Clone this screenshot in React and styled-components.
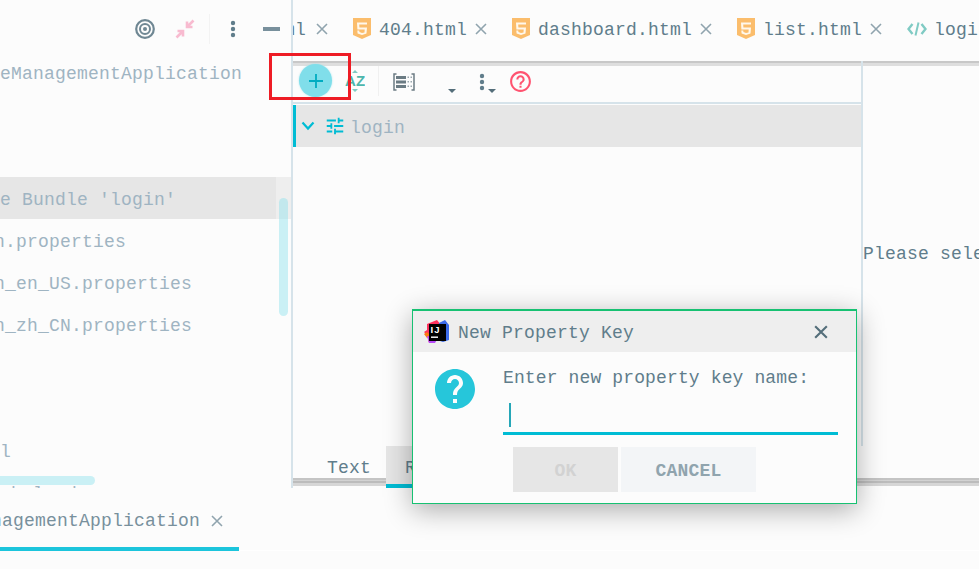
import React from 'react';
import styled, { createGlobalStyle } from 'styled-components';

const GlobalStyle = createGlobalStyle`
  html, body {
    margin: 0;
    padding: 0;
    background: #fcfcfc;
  }
  * { box-sizing: border-box; }
`;

const colors = {
  bg: '#fcfcfc',
  text: '#607d8b',
  faded: '#9fb4c2',
  cyan: '#00bcd4',
  line: '#d6e3ea',
  selected: '#e6e6e6',
  close: '#90a4ae',
};

const Page = styled.div`
  position: relative;
  width: 979px;
  height: 569px;
  overflow: hidden;
  display: flex;
  flex-direction: column;
  background: ${colors.bg};
  font-family: "Liberation Mono", "DejaVu Sans Mono", monospace;
  font-size: 18px;
  letter-spacing: 0.2px;
  color: ${colors.text};
`;

const Workspace = styled.div`
  display: flex;
  height: 488px;
`;

const LeftPane = styled.div`
  position: relative;
  width: 293px;
  flex: none;
  border-right: 2px solid ${colors.line};
  overflow: hidden;
`;

const LeftTools = styled.div`
  display: flex;
  justify-content: flex-end;
  align-items: flex-start;
  height: 51px;
  padding: 19px 11px 0 0;
`;

const ToolSlot = styled.div`
  display: flex;
  align-items: center;
  justify-content: center;
  height: 20px;
  margin-left: ${({ $gap }) => $gap || 0}px;
`;

const ToolDivider = styled.div`
  width: 1px;
  height: 30px;
  margin: -5px 0 0 14px;
  background: #f3f3f3;
`;

const TreeRow = styled.div`
  height: 42px;
  line-height: 46px;
  white-space: pre;
  overflow: hidden;
  color: ${colors.faded};
  margin-left: ${({ $shift }) => $shift || 0}px;
  background: ${({ $selected }) => $selected
    ? `linear-gradient(to right, ${colors.selected} 276px, #eeeeee 276px)`
    : 'transparent'};
`;

const VerticalThumb = styled.div`
  position: absolute;
  left: 279px;
  top: 198px;
  width: 9px;
  height: 118px;
  border-radius: 5px;
  background: rgba(128, 222, 234, 0.4);
`;

const HorizontalThumb = styled.div`
  position: absolute;
  left: -10px;
  top: 476px;
  width: 105px;
  height: 9px;
  border-radius: 5px;
  background: rgba(128, 222, 234, 0.4);
`;

const RightPane = styled.div`
  flex: 1;
  min-width: 0;
  display: flex;
  flex-direction: column;
`;

const TabBar = styled.div`
  display: flex;
  align-items: center;
  height: 61px;
  padding-bottom: 3px;
  overflow: hidden;
  flex: none;
`;

const Tab = styled.div`
  display: flex;
  align-items: center;
  flex: none;
  white-space: nowrap;
  margin-left: ${({ $offset }) => $offset ?? 25}px;
`;

const TabLabel = styled.span`
  padding-top: 2px;
`;

const TabIcon = styled.span`
  display: flex;
  margin-right: ${({ $gap }) => $gap || 8}px;
`;

const CloseMark = styled.span`
  display: flex;
  margin-left: ${({ $gap }) => $gap || 8}px;
`;

const EditorRow = styled.div`
  flex: 1;
  display: flex;
  min-height: 0;
  background: linear-gradient(to bottom, #c8c8c8 0, #c8c8c8 2px, #dedede 2px, #dedede 5px, transparent 5px);
`;

const CenterPane = styled.div`
  width: 570px;
  flex: none;
  padding-top: 5px;
  border-right: 2px solid ${colors.line};
`;

const ActionBar = styled.div`
  display: flex;
  align-items: center;
  height: 38px;
  padding: 0 0 7px 6px;
  border-bottom: 2px solid ${colors.line};
`;

const AddButton = styled.div`
  display: flex;
  align-items: center;
  justify-content: center;
  width: 33px;
  height: 33px;
  flex: none;
  border-radius: 50%;
  background: #80deea;
  box-shadow: 0 0 2px rgba(128, 222, 234, 0.7);
`;

const ActionIcon = styled.span`
  display: flex;
  flex: none;
  margin-left: ${({ $gap }) => $gap || 0}px;
  margin-top: ${({ $drop }) => $drop || 0}px;
`;

const ActionDivider = styled.div`
  width: 1px;
  height: 30px;
  flex: none;
  margin-left: 13px;
  background: #f0f0f0;
`;

const DropCaret = styled.span`
  flex: none;
  width: 0;
  height: 0;
  margin: 20px 0 0 ${({ $gap }) => $gap}px;
  border-left: 4px solid transparent;
  border-right: 4px solid transparent;
  border-top: 4px solid #546e7a;
`;

const BundleRow = styled.div`
  display: flex;
  align-items: center;
  height: 42px;
  margin-top: 1px;
  padding-left: 5px;
  border-left: 3px solid ${colors.cyan};
  background: ${colors.selected};
  color: ${colors.faded};
`;

const BundleName = styled.span`
  margin-left: 4px;
  padding-top: 4px;
`;

const EmptyHint = styled.div`
  flex: 1;
  display: flex;
  align-items: center;
  padding: 7px 0 6px 0;
  white-space: nowrap;
  overflow: hidden;
`;

const ViewTabs = styled.div`
  display: flex;
  height: 42px;
  flex: none;
  background: linear-gradient(to bottom,
    #c4c4c4 0, #c4c4c4 2px,
    #d2d2d2 2px, #d2d2d2 3px,
    #bcbcbc 3px, #bcbcbc 5px,
    #d6d6d6 5px, #d6d6d6 8px) 0 32px / 100% 8px no-repeat;
`;

const ViewTab = styled.div`
  width: ${({ $width }) => $width}px;
  padding-left: ${({ $pad }) => $pad}px;
  line-height: 44px;
  background: ${({ $active }) => ($active ? colors.selected : 'transparent')};
  border-bottom: ${({ $active }) => ($active ? `4px solid ${colors.cyan}` : 'none')};
  white-space: nowrap;
  overflow: hidden;
`;

const BottomBar = styled.div`
  flex: 1;
  display: flex;
  flex-direction: column;
`;

const ToolWindowTabs = styled.div`
  height: 63px;
  flex: none;
  border-bottom: 1px solid #ffffff;
`;

const ToolWindowTab = styled.div`
  display: flex;
  align-items: center;
  width: 239px;
  height: 63px;
  padding-top: 7px;
  border-bottom: 4px solid #1cc5dc;
  white-space: nowrap;
  color: #78909c;
`;

const ToolWindowName = styled.span`
  margin-left: -9px;
`;

const Highlight = styled.div`
  position: absolute;
  left: 269px;
  top: 53px;
  width: 82px;
  height: 47px;
  border: 3px solid #ee1c25;
`;

const Dialog = styled.div`
  position: absolute;
  left: 412px;
  top: 309px;
  width: 445px;
  height: 195px;
  display: flex;
  flex-direction: column;
  background: ${colors.bg};
  border-style: solid;
  border-color: #17c172;
  border-width: 2px 1px 1px 1px;
  box-shadow: 0 6px 26px rgba(0, 0, 0, 0.32);
`;

const DialogTitle = styled.div`
  display: flex;
  align-items: center;
  height: 41px;
  flex: none;
  padding: 0 28px 0 11px;
  background: #eeeeee;
`;

const TitleText = styled.span`
  flex: 1;
  margin-left: 8px;
  padding-top: 2px;
`;

const DialogBody = styled.div`
  display: flex;
  padding: 14px 0 0 18px;
`;

const QuestionIcon = styled.div`
  width: 48px;
  height: 48px;
  flex: none;
  margin-top: -1px;
`;

const DialogForm = styled.div`
  margin-left: 24px;
  width: 335px;
`;

const PromptLabel = styled.div`
  height: 22px;
  line-height: 24px;
  letter-spacing: 0.13px;
  white-space: nowrap;
`;

const KeyInput = styled.div`
  height: 47px;
  padding: 15px 0 0 6px;
  border-bottom: 3px solid ${colors.cyan};
`;

const Caret = styled.div`
  width: 1.5px;
  height: 24px;
  background: #26a7b8;
`;

const ButtonRow = styled.div`
  display: flex;
  gap: 3px;
  margin: 12px 0 0 10px;
`;

const DialogButton = styled.div`
  display: flex;
  align-items: center;
  justify-content: center;
  width: ${({ $width }) => $width}px;
  height: 45px;
  padding-top: 2px;
  font-weight: bold;
  background: ${({ $disabled }) => ($disabled ? '#e6e6e6' : '#f3f5f7')};
  color: ${({ $disabled }) => ($disabled ? '#d2d2d2' : '#90a4ae')};
`;

const CloseIcon = ({ size = 12, color = colors.close, width = 1.6 }) => (
  <svg width={size} height={size} viewBox="0 0 12 12">
    <path d="M1 1l10 10M11 1L1 11" stroke={color} strokeWidth={width} fill="none" />
  </svg>
);

const Html5Icon = () => (
  <svg width="18" height="22" viewBox="0 0 18 22">
    <path d="M0 0h18v17l-9 4-9-4z" fill="#fbbd6c" />
    <path d="M4 4.500h10v2H6.200l.2 3H14l-.5 6L9 17l-4.400-1.500-.3-3h2l.1 1.400L9 15l2.500-.6.200-2.900H4.400z" fill="#fff8ec" />
  </svg>
);

const CodeIcon = () => (
  <svg width="20" height="16" viewBox="0 0 20 16">
    <path d="M5.500 3L1.500 8l4 5M14.500 3l4 5-4 5" stroke="#80cbc4" strokeWidth="2.400" fill="none" />
    <path d="M11.500 1.500L8.500 14.500" stroke="#80cbc4" strokeWidth="2" fill="none" />
  </svg>
);

const TargetIcon = () => (
  <svg width="20" height="20" viewBox="0 0 20 20">
    <circle cx="10" cy="10" r="8.800" fill="none" stroke="#6f8793" strokeWidth="2.200" />
    <circle cx="10" cy="10" r="5" fill="none" stroke="#6f8793" strokeWidth="2" />
    <circle cx="10" cy="10" r="2" fill="#6f8793" />
  </svg>
);

const CompressIcon = () => (
  <svg width="20" height="20" viewBox="0 0 20 20">
    <g fill="none" stroke="#f8bbd0" strokeWidth="2.600">
      <path d="M18.500 1.500L12 8M12 2.500V8h5.500" />
      <path d="M1.500 18.500L8 12M8 17.500V12H2.500" />
    </g>
  </svg>
);

const DotsIcon = ({ height = 18, color = '#607d8b' }) => (
  <svg width="6" height={height} viewBox="0 0 6 18">
    <circle cx="3" cy="3" r="2.200" fill={color} />
    <circle cx="3" cy="9" r="2.200" fill={color} />
    <circle cx="3" cy="15" r="2.200" fill={color} />
  </svg>
);

const PlusIcon = () => (
  <svg width="16" height="16" viewBox="0 0 16 16">
    <path d="M8 1v14M1 8h14" stroke="#00acc1" strokeWidth="1.800" fill="none" />
  </svg>
);

const SortIcon = () => (
  <svg width="20" height="22" viewBox="0 0 20 22">
    <path d="M10 0l3 3h-6zM10 22l-3-3h6z" fill="#80cbc4" />
    <text x="0" y="16" fontFamily="Liberation Sans, sans-serif" fontWeight="bold" fontSize="15" fill="#4db6ac">AZ</text>
  </svg>
);

const StructureIcon = () => (
  <svg width="22" height="18" viewBox="0 0 22 18">
    <path d="M3.500 1H1v16h2.500M18.500 1H21v16h-2.500" stroke="#6b7b83" strokeWidth="1.500" fill="none" />
    <path d="M3 3h10v3H3zM3 7.500h10v3H3zM3 12h10v3H3z" fill="#6b7b83" />
    <path d="M14.500 3.500h1.500V5h-1.500zM17.500 3.500H19V5h-1.500zM14.500 8h1.500v1.500h-1.500zM17.500 8H19v1.500h-1.500zM14.500 12.500h1.500V14h-1.500zM17.500 12.500H19V14h-1.500z" fill="#9aa7ae" />
  </svg>
);

const HelpOutlineIcon = () => (
  <svg width="25" height="25" viewBox="0 0 24 24">
    <path fill="#ff5370" d="M11 18h2v-2h-2v2zm1-16C6.480 2 2 6.480 2 12s4.480 10 10 10 10-4.480 10-10S17.520 2 12 2zm0 18c-4.410 0-8-3.590-8-8s3.590-8 8-8 8 3.590 8 8-3.590 8-8 8zm0-14c-2.210 0-4 1.790-4 4h2c0-1.100.9-2 2-2s2 .9 2 2c0 2-3 1.750-3 5h2c0-2.250 3-2.500 3-5 0-2.210-1.790-4-4-4z" />
  </svg>
);

const ChevronIcon = () => (
  <svg width="14" height="10" viewBox="0 0 14 10">
    <path d="M1.500 1.500L7 7.500l5.500-6" stroke={colors.cyan} strokeWidth="2.200" fill="none" />
  </svg>
);

const TuneIcon = () => (
  <svg width="22" height="22" viewBox="0 0 24 24">
    <path fill={colors.cyan} d="M3 17v2h6v-2H3zM3 5v2h10V5H3zm10 16v-2h8v-2h-8v-2h-2v6h2zM7 9v2H3v2h4v2h2V9H7zm14 4v-2H11v2h10zm-6-4h2V7h4V5h-4V3h-2v6z" />
  </svg>
);

const IdeaLogo = () => (
  <svg width="26" height="26" viewBox="0 0 26 26">
    <path d="M3 5l10-4 4 5-6 16-6 2-2-8-3-3 3-2z" fill="#fe315d" />
    <path d="M3 13l-3 2 3 4 3-3z" fill="#f97a12" />
    <path d="M3 17l2 7 6 0 3-5z" fill="#b74af7" />
    <path d="M15 4l6-3 4 5 0 15-6 2-6-2z" fill="#3d6be8" />
    <rect x="5" y="5" width="17" height="17" fill="#000000" />
    <text x="6.500" y="14" fontFamily="Liberation Sans, sans-serif" fontWeight="bold" fontSize="9.500" letterSpacing="1" fill="#ffffff">IJ</text>
    <rect x="7" y="17.500" width="7" height="1.400" fill="#ffffff" />
  </svg>
);

const QuestionFilled = () => (
  <svg width="48" height="48" viewBox="0 0 24 24">
    <path fill="#26c6da" d="M12 2C6.480 2 2 6.480 2 12s4.480 10 10 10 10-4.480 10-10S17.520 2 12 2zm1 17h-2v-2h2v2zm2.070-7.750l-.9.920C13.450 12.900 13 13.500 13 15h-2v-.5c0-1.100.450-2.100 1.170-2.830l1.240-1.260c.370-.360.590-.860.590-1.410 0-1.100-.9-2-2-2s-2 .9-2 2H8c0-2.210 1.790-4 4-4s4 1.790 4 4c0 .880-.360 1.680-.930 2.250z" />
  </svg>
);

const treeRows = [
  { text: 'eManagementApplication' },
  { text: '' },
  { text: '' },
  { text: "e Bundle 'login'", selected: true },
  { text: 'n.properties', shift: -6 },
  { text: 'n_en_US.properties', shift: -6 },
  { text: 'n_zh_CN.properties', shift: -6 },
  { text: '' },
  { text: '' },
  { text: 'l', shift: 0 },
  { text: 'ab l  d' },
];

const fileTabs = [
  { name: '404.html' },
  { name: 'dashboard.html' },
  { name: 'list.html' },
];

const App = () => (
  <Page>
    <GlobalStyle />
    <Workspace>
      <LeftPane>
        <LeftTools>
          <ToolSlot><TargetIcon /></ToolSlot>
          <ToolSlot $gap={20}><CompressIcon /></ToolSlot>
          <ToolDivider />
          <ToolSlot $gap={20}><DotsIcon /></ToolSlot>
          <ToolSlot $gap={27}>
            <svg width="17" height="4" viewBox="0 0 17 4"><rect width="17" height="4" fill="#78909c" /></svg>
          </ToolSlot>
        </LeftTools>
        {treeRows.map((row, i) => (
          <TreeRow key={i} $selected={row.selected} $shift={row.shift}>{row.text}</TreeRow>
        ))}
        <VerticalThumb />
        <HorizontalThumb />
      </LeftPane>
      <RightPane>
        <TabBar>
          <Tab $offset={-9}>
            <TabLabel>ml</TabLabel>
            <CloseMark $gap={10}><CloseIcon /></CloseMark>
          </Tab>
          {fileTabs.map((tab) => (
            <Tab key={tab.name}>
              <TabIcon><Html5Icon /></TabIcon>
              <TabLabel>{tab.name}</TabLabel>
              <CloseMark><CloseIcon /></CloseMark>
            </Tab>
          ))}
          <Tab>
            <TabIcon $gap={7}><CodeIcon /></TabIcon>
            <TabLabel>login.html</TabLabel>
          </Tab>
        </TabBar>
        <EditorRow>
          <CenterPane>
            <ActionBar>
              <AddButton><PlusIcon /></AddButton>
              <ActionIcon $gap={13}><SortIcon /></ActionIcon>
              <ActionDivider />
              <ActionIcon $gap={14} $drop={2}><StructureIcon /></ActionIcon>
              <DropCaret $gap={33} />
              <ActionIcon $gap={23} $drop={2}><DotsIcon /></ActionIcon>
              <DropCaret $gap={3} />
              <ActionIcon $gap={12} $drop={2}><HelpOutlineIcon /></ActionIcon>
            </ActionBar>
            <BundleRow>
              <ChevronIcon />
              <ActionIcon $gap={9}><TuneIcon /></ActionIcon>
              <BundleName>login</BundleName>
            </BundleRow>
          </CenterPane>
          <EmptyHint>Please select a property</EmptyHint>
        </EditorRow>
        <ViewTabs>
          <ViewTab $width={93} $pad={34}>Text</ViewTab>
          <ViewTab $width={203} $pad={19} $active>Resource Bundle</ViewTab>
        </ViewTabs>
      </RightPane>
    </Workspace>
    <BottomBar>
      <ToolWindowTabs>
        <ToolWindowTab>
          <ToolWindowName>nagementApplication</ToolWindowName>
          <CloseMark $gap={11}><CloseIcon /></CloseMark>
        </ToolWindowTab>
      </ToolWindowTabs>
    </BottomBar>
    <Highlight />
    <Dialog>
      <DialogTitle>
        <IdeaLogo />
        <TitleText>New Property Key</TitleText>
        <CloseIcon size={14} color="#546e7a" width={1.800} />
      </DialogTitle>
      <DialogBody>
        <QuestionIcon><QuestionFilled /></QuestionIcon>
        <DialogForm>
          <PromptLabel>Enter new property key name:</PromptLabel>
          <KeyInput><Caret /></KeyInput>
          <ButtonRow>
            <DialogButton $width={105} $disabled>OK</DialogButton>
            <DialogButton $width={135}>CANCEL</DialogButton>
          </ButtonRow>
        </DialogForm>
      </DialogBody>
    </Dialog>
  </Page>
);

export default App;
